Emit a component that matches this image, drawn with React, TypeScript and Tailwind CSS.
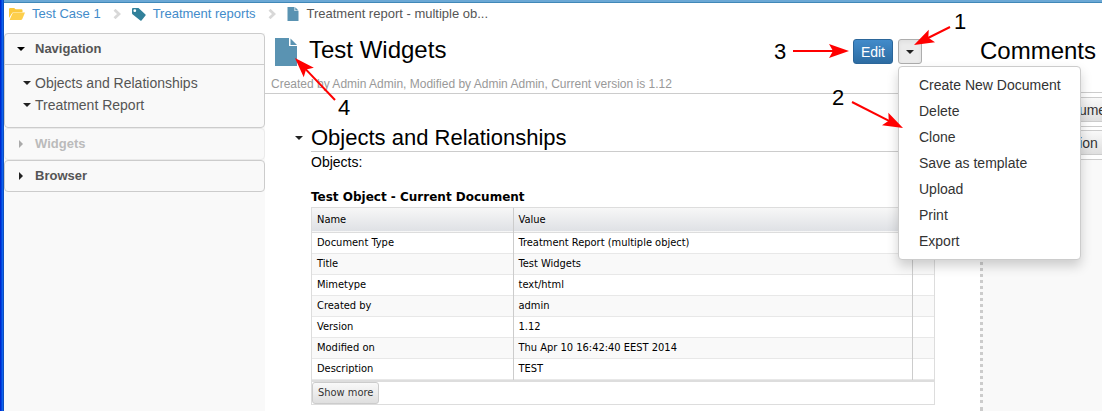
import { useState } from "react";

const menuItems = ["Create New Document", "Delete", "Clone", "Save as template", "Upload", "Print", "Export"];

const rows = [
  ["Document Type", "Treatment Report (multiple object)"],
  ["Title", "Test Widgets"],
  ["Mimetype", "text/html"],
  ["Created by", "admin"],
  ["Version", "1.12"],
  ["Modified on", "Thu Apr 10 16:42:40 EEST 2014"],
  ["Description", "TEST"],
];

function Caret({ className = "" }: { className?: string }) {
  return (
    <svg viewBox="0 0 8 4" className={`h-1 w-2 shrink-0 fill-[#222] ${className}`} aria-hidden="true">
      <path d="M0 0H8L4 4Z" />
    </svg>
  );
}

function CaretRight({ className = "" }: { className?: string }) {
  return (
    <svg viewBox="0 0 4 8" className={`h-2 w-1 shrink-0 ${className}`} aria-hidden="true">
      <path d="M0 0V8L4 4Z" />
    </svg>
  );
}

function DocIcon({ className = "" }: { className?: string }) {
  return (
    <svg viewBox="0 0 22 28" className={`shrink-0 fill-[#5a93b2] ${className}`} aria-hidden="true">
      <path d="M0 0H14V8H22V28H0Z" />
      <path d="M15.500 0.500L22 7H15.500Z" />
    </svg>
  );
}

function FolderIcon() {
  return (
    <svg viewBox="0 0 16 12" className="h-3 w-4 shrink-0" aria-hidden="true">
      <path d="M0 10V1.200Q0 0 1.200 0H5.200L6.500 1.200H12.500Q13.500 1.200 13.500 2.200V4.200H5Q3.500 4.200 2.800 5.500Z" fill="#fbc93c" />
      <path d="M0.600 12L3.300 5.800Q3.800 4.600 5 4.600H16L13.300 11Q12.800 12 11.800 12Z" fill="#fdcf4c" />
    </svg>
  );
}

function TagIcon() {
  return (
    <svg viewBox="0 0 14 13" className="h-[13px] w-3.5 shrink-0" aria-hidden="true">
      <path fillRule="evenodd" d="M0 1Q0 0 1 0H6.500L13.500 6.500Q14 7 13.500 7.600L9.500 12.500Q9 13 8.300 12.500L0.800 6.500Q0 6 0 5ZM2.800 1.300A1.400 1.400 0 1 0 2.800 4.100A1.400 1.400 0 1 0 2.800 1.300Z" fill="#31809a" />
    </svg>
  );
}

function Chevron() {
  return (
    <span className="flex h-[18px] items-center pr-[11px] pl-3">
      <svg viewBox="0 0 8 10" className="h-2.5 w-2 shrink-0" aria-hidden="true">
        <path d="M1.500 0.800L6 5L1.500 9.200" fill="none" stroke="#d8d8d8" strokeWidth="2.800" />
      </svg>
    </span>
  );
}

function Arrow({ x1, y1, x2, y2 }: { x1: number; y1: number; x2: number; y2: number }) {
  const angle = (Math.atan2(y2 - y1, x2 - x1) * 180) / Math.PI;
  const length = Math.hypot(x2 - x1, y2 - y1);
  return (
    <g transform={`translate(${x2} ${y2}) rotate(${angle})`}>
      <path d={`M${-length} 0H-14`} stroke="red" strokeWidth="2" />
      <path d="M0 0L-20 -7L-16 0L-20 7Z" fill="red" />
    </g>
  );
}

export default function App() {
  const [open, setOpen] = useState(true);
  return (
    <div className="relative flex min-h-screen overflow-hidden bg-white font-['Liberation_Sans',sans-serif] text-sm text-[#333]">
      <div className="w-1 shrink-0 border-r border-[#0c4fc0] bg-linear-to-r from-[#0010c8] to-[#1a6cf4]" />
      <div className="flex min-w-0 grow flex-col">
        <div className="h-[3px] border-b border-[#4088b8] bg-[#6ba8d5]" />
        <nav aria-label="Breadcrumb" className="flex h-[30px] items-start pt-0.5 pl-[5px] text-[13px] leading-[18px]">
          <a href="#case" className="flex items-center gap-[7px] text-[#428bca]"><FolderIcon />Test Case 1</a>
          <Chevron />
          <a href="#reports" className="flex items-center gap-[7px] text-[#428bca]"><TagIcon />Treatment reports</a>
          <Chevron />
          <span className="flex items-center gap-2 text-[#555]"><DocIcon className="h-3.5 w-3" />Treatment report - multiple ob...</span>
        </nav>

        <div className="flex grow">
          <aside className="w-[261px] shrink-0 bg-[#f9f9f9] text-[#555]">
            <section className="rounded border border-[#ccc]">
              <h2>
                <button className="flex h-[30px] w-full items-center gap-2.5 pl-3 text-[13px] font-bold"><Caret className="fill-black" />Navigation</button>
              </h2>
              <ul className="flex h-[63px] flex-col border-t border-[#ccc] pt-[7px] leading-[22px]">
                <li><a href="#objects" className="flex items-center gap-1 pl-[18px]"><Caret />Objects and Relationships</a></li>
                <li><a href="#treatment" className="flex items-center gap-1 pl-[18px]"><Caret />Treatment Report</a></li>
              </ul>
            </section>
            <section className="rounded border border-[#eaeaea]">
              <button disabled className="flex h-[30px] w-full items-center gap-3 pl-3.5 text-[13px] font-bold text-[#bbb]"><CaretRight className="fill-[#aaa]" />Widgets</button>
            </section>
            <section className="rounded border border-[#ccc]">
              <button className="flex h-[30px] w-full items-center gap-3 pl-3.5 text-[13px] font-bold"><CaretRight className="fill-[#222]" />Browser</button>
            </section>
          </aside>

          <main className="flex min-w-0 grow flex-col">
            <header className="border-b border-[#ccc]">
              <div className="flex h-[37px] items-center pr-[58px] pl-2.5">
                <DocIcon className="h-7 w-[22px]" />
                <h1 className="grow pb-1 pl-3 text-[24px] leading-8 text-black">Test Widgets</h1>
                <div className="flex gap-[5px]">
                  <button className="h-[25px] rounded-[3px] border border-[#2b669a] bg-linear-to-b from-[#428bca] to-[#2d6ca2] px-[7px] text-white">Edit</button>
                  <div className="relative">
                    <button
                      aria-label="More actions"
                      aria-expanded={open}
                      onClick={() => setOpen(!open)}
                      className="flex h-[25px] w-6 items-center justify-center rounded-[3px] border border-[#adadad] bg-[#ebebeb] shadow-inner"
                    >
                      <Caret />
                    </button>
                    {open && (
                      <ul className="absolute top-[27px] left-0 z-10 w-[183px] rounded border border-[#ccc] bg-white py-[5px] shadow-[0_6px_12px_rgba(0,0,0,0.18)]">
                        {menuItems.map((item) => (
                          <li key={item}><button className="block h-[26px] w-full px-5 text-left whitespace-nowrap">{item}</button></li>
                        ))}
                      </ul>
                    )}
                  </div>
                </div>
              </div>
              <p className="h-[23px] pt-1.5 pl-1.5 text-xs leading-4 whitespace-nowrap text-[#999]">Created by Admin Admin, Modified by Admin Admin, Current version is 1.12</p>
            </header>

            <section className="flex pt-[30px] pr-[45px] pl-[30px] text-black">
              <Caret className="mt-3" />
              <div className="ml-2 grow">
                <h2 className="h-[28px] border-b border-[#ccc] text-[22px] leading-7">Objects and Relationships</h2>
                <p className="leading-5">Objects:</p>
                <h3 className="pt-[17px] font-['DejaVu_Sans',sans-serif] text-xs leading-4 font-bold">Test Object - Current Document</h3>
                <div className="mt-0.5 border border-[#ddd] font-['DejaVu_Sans_Condensed','DejaVu_Sans',sans-serif] text-[11px]">
                  <table className="w-full border-collapse text-left leading-4">
                    <thead>
                      <tr className="h-6 border-b border-[#ddd] bg-linear-to-b from-[#f7f7f7] to-[#dfe1e5]">
                        <th className="w-[201px] border-r border-[#ccc] px-[5px] font-normal">Name</th>
                        <th className="border-r border-[#ccc] px-[5px] font-normal">Value</th>
                        <th className="w-[22px]"></th>
                      </tr>
                    </thead>
                    <tbody>
                      {rows.map(([name, value]) => (
                        <tr key={name} className="h-[21px] border-b border-[#e8e8e8] even:bg-[#f9f9f9]">
                          <td className="border-r border-[#ccc] px-[5px]">{name}</td>
                          <td className="border-r border-[#ccc] px-[5px]">{value}</td>
                          <td></td>
                        </tr>
                      ))}
                    </tbody>
                  </table>
                  <div className="border-t-2 border-[#ddd]">
                    <button className="block h-[22px] rounded-[3px] border border-[#ccc] bg-linear-to-b from-[#f9f9f9] to-[#dfdfdf] px-[5px] text-[#333]">Show more</button>
                  </div>
                </div>
              </div>
            </section>
          </main>

          <aside className="flex w-[122px] shrink-0 flex-col">
            <h2 className="h-[60px] border-b border-[#ccc] pt-0.5 text-[24px] leading-8 text-black">Comments</h2>
            <div className="flex grow flex-col border-l-3 border-dotted border-[#ccc] bg-[#f9f9f9]">
              <div className="flex h-[34px] items-start overflow-hidden border-b border-[#ccc] bg-white pt-1">
                <button className="h-[25px] w-[160px] shrink-0 border border-[#ccc] bg-linear-to-b from-[#f9f9f9] to-[#dfdfdf] pl-[70px] text-left whitespace-nowrap">Document</button>
              </div>
              <div className="flex h-[33px] items-start overflow-hidden border-b border-[#ccc] bg-white pt-[3px]">
                <button className="h-[25px] w-[160px] shrink-0 border border-[#ccc] bg-linear-to-b from-[#f9f9f9] to-[#dfdfdf] pl-[75px] text-left whitespace-nowrap">Action</button>
              </div>
            </div>
          </aside>
        </div>
      </div>

      <svg className="pointer-events-none absolute top-0 left-0 z-20 h-[411px] w-[1102px]" aria-hidden="true">
        <Arrow x1={950} y1={27} x2={914} y2={45} />
        <Arrow x1={852} y1={102} x2={903} y2={128} />
        <Arrow x1={793} y1={51} x2={849} y2={51} />
        <Arrow x1={335} y1={100} x2={295} y2={58} />
        <g className="fill-black text-[22px]">
          <text x="954" y="29">1</text>
          <text x="832" y="105">2</text>
          <text x="774" y="59">3</text>
          <text x="338" y="115">4</text>
        </g>
      </svg>
    </div>
  );
}
